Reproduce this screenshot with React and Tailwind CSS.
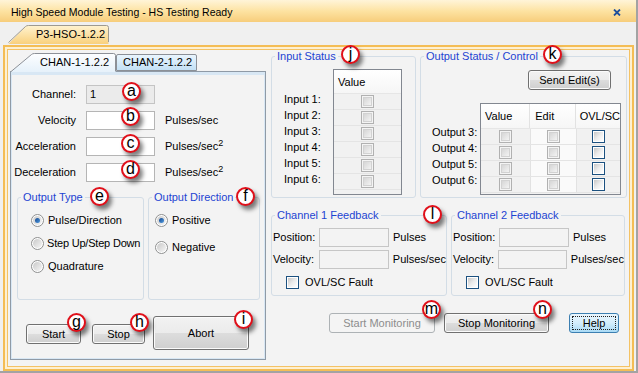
import React from 'react';

function Callout({ className, letter }) {
  return (
    <div
      className={`absolute z-30 flex h-[19px] w-[19px] items-center justify-center rounded-full border-2 border-[#e0101a] bg-white pb-[1px] text-[16px] leading-none text-black shadow-[3px_4px_4px_rgba(0,0,0,0.5)] ${className}`}
    >
      {letter}
    </div>
  );
}

function WinButton({ className, children }) {
  return (
    <div
      className={`flex items-center justify-center whitespace-nowrap rounded-[3px] border border-[#707070] bg-[linear-gradient(to_bottom,#f2f2f2_0%,#ebebeb_50%,#dddddd_50%,#cfcfcf_100%)] shadow-[inset_0_0_0_1px_#fbfbfb] ${className}`}
    >
      {children}
    </div>
  );
}

function Radio({ checked }) {
  return (
    <span className="flex h-[13px] w-[13px] shrink-0 items-center justify-center rounded-full border border-[#8e8f8f] bg-white">
      <span className="flex h-[9px] w-[9px] items-center justify-center rounded-full bg-gradient-to-br from-[#c9c9c9] to-[#f6f6f6]">
        {checked && <span className="h-[5px] w-[5px] rounded-full bg-gradient-to-br from-[#17498f] to-[#4f9ae0]" />}
      </span>
    </span>
  );
}

function CheckOff() {
  return (
    <span className="flex h-[13px] w-[13px] border border-[#b1b1b1] bg-[#f4f4f4] p-[1px]">
      <span className="h-full w-full border border-[#d2d2d2] bg-gradient-to-br from-[#d6d6d6] to-[#f3f3f3]" />
    </span>
  );
}

function CheckOn() {
  return (
    <span className="flex h-[13px] w-[13px] shrink-0 border border-[#1c5180] bg-white p-[1px]">
      <span className="h-full w-full bg-gradient-to-br from-[#c8c8c8] via-[#ececec] to-white" />
    </span>
  );
}

function Group({ title, className, children }) {
  return (
    <fieldset className={`min-w-0 shrink-0 rounded-[3px] border border-[#d3dde6] ${className}`}>
      <legend className="ml-[3px] whitespace-nowrap px-[2px] leading-[13px] text-[#1d44d2]">{title}</legend>
      {children}
    </fieldset>
  );
}

function Feedback({ title, className }) {
  return (
    <Group title={title} className={`h-[87px] ${className}`}>
      <div className="mt-[6px] flex h-[19px] items-center whitespace-nowrap pl-[1px]">
        <span className="w-[46px]">Position:</span>
        <div className="h-[19px] w-[70px] border border-[#c6c6c6] bg-[#f3f3f3]" />
        <span className="ml-[4px]">Pulses</span>
      </div>
      <div className="mt-[3px] flex h-[19px] items-center whitespace-nowrap pl-[1px]">
        <span className="w-[46px]">Velocity:</span>
        <div className="h-[19px] w-[70px] border border-[#c6c6c6] bg-[#f3f3f3]" />
        <span className="ml-[4px]">Pulses/sec</span>
      </div>
      <div className="ml-[14px] mt-[7px] flex h-[13px] items-center whitespace-nowrap">
        <CheckOn />
        <span className="ml-[6px]">OVL/SC Fault</span>
      </div>
    </Group>
  );
}

export default function App() {
  const fields = [
    { label: 'Channel:', unit: null, disabled: true },
    { label: 'Velocity', unit: 'Pulses/sec' },
    { label: 'Acceleration', unit: 'sq' },
    { label: 'Deceleration', unit: 'sq' },
  ];

  return (
    <div className="relative h-[373px] w-[638px] overflow-hidden border-b-2 border-r-2 border-[#a3a3a3] bg-[#f0f0f0] font-['Liberation_Sans',Arial,sans-serif] text-[11px] leading-[13px] text-black">
      {/* title bar */}
      <div className="flex h-[22px] items-center bg-gradient-to-b from-[#fff4d8] via-[#fde3a2] to-[#f7cd7b] pl-[11px] pr-[15px]">
        <span className="pt-[3px] text-[10.5px]">High Speed Module Testing - HS Testing Ready</span>
        <svg className="ml-auto mt-[3px]" width="8" height="7" viewBox="0 0 8 7">
          <path d="M1 0.5 L7 6.5 M7 0.5 L1 6.5" stroke="#1f4f9c" strokeWidth="1.8" />
        </svg>
      </div>

      {/* outer tab strip */}
      <div className="h-[20px]">
        <div className="relative z-10 ml-[8px] mt-[3px] h-[19px] w-[101px]">
          <svg className="absolute inset-0" width="101" height="19" viewBox="0 0 101 19">
            <defs>
              <linearGradient id="p3tab" x1="0" y1="0" x2="0" y2="1">
                <stop offset="0" stopColor="#fff3d0" />
                <stop offset="1" stopColor="#f9d07c" />
              </linearGradient>
            </defs>
            <path d="M0.5 19 L17.5 1.5 Q18.5 0.5 20.5 0.5 L98.5 0.5 Q100.5 0.5 100.5 2.5 L100.5 19 Z" fill="url(#p3tab)" />
            <path d="M0.5 17.5 L17.5 1.5 Q18.5 0.5 20.5 0.5 L98.5 0.5 Q100.5 0.5 100.5 2.5 L100.5 17" fill="none" stroke="#9e9a90" />
          </svg>
          <span className="relative block pl-[28px] pt-[3px]">P3-HSO-1.2.2</span>
        </div>
      </div>

      {/* orange tab page */}
      <div className="ml-[3px] h-[326px] w-[631px] border-2 border-[#f4bd55] bg-[#fdf0d2] p-[2px]">
        <div className="flex h-full border border-[#f4c264] bg-[#f3f3f3]">
          {/* left tab control */}
          <div className="ml-[2px] mt-[3px] w-[256px] shrink-0">
            <div className="flex h-[18px] items-start">
              <div className="relative z-10 h-[19px] w-[106px]">
                <svg className="absolute inset-0" width="106" height="19" viewBox="0 0 106 19">
                  <defs>
                    <linearGradient id="chtab" x1="0" y1="0" x2="0" y2="1">
                      <stop offset="0" stopColor="#fdfeff" />
                      <stop offset="1" stopColor="#e6f1fa" />
                    </linearGradient>
                  </defs>
                  <path d="M0.5 19 L21.5 1.5 Q22.5 0.5 24.5 0.5 L103.5 0.5 Q105.5 0.5 105.5 2.5 L105.5 19 Z" fill="url(#chtab)" />
                  <path d="M0.5 19 L21.5 1.5 Q22.5 0.5 24.5 0.5 L103.5 0.5 Q105.5 0.5 105.5 2.5 L105.5 18" fill="none" stroke="#8c9097" />
                </svg>
                <span className="relative block pl-[30px] pt-[3px]">CHAN-1-1.2.2</span>
              </div>
              <div className="mt-[1px] h-[17px] w-[81px] rounded-t-[2px] border border-[#8c9097] bg-gradient-to-b from-[#e9f5fd] to-[#c3e0f5] pl-[6px] pt-[1px]">
                CHAN-2-1.2.2
              </div>
            </div>
            <div className="h-[289px] border border-[#8f9aa6] bg-[#f3f3f3] shadow-[inset_0_0_0_1px_#d8e7f4,inset_0_2px_0_1px_#d8e7f4]">
              <div className="mt-[13px] flex flex-col gap-[7px]">
                {fields.map((f) => (
                  <div key={f.label} className="flex h-[19px] items-center">
                    <span className="w-[65px] text-right">{f.label}</span>
                    {f.disabled ? (
                      <div className="ml-[10px] flex h-[19px] w-[69px] items-center border border-[#c4c4c4] bg-[#ebebeb] pl-[3px]">1</div>
                    ) : (
                      <div className="ml-[10px] h-[19px] w-[69px] border border-[#b5b5b5] bg-white" />
                    )}
                    {f.unit === 'Pulses/sec' && <span className="ml-[10px]">Pulses/sec</span>}
                    {f.unit === 'sq' && (
                      <span className="ml-[10px]">
                        Pulses/sec<sup className="text-[9px]">2</sup>
                      </span>
                    )}
                  </div>
                ))}
              </div>

              <div className="ml-[6px] mt-[9px] flex gap-[4px]">
                <Group title="Output Type" className="h-[109px] w-[127px]">
                  <div className="ml-[13px] mt-[8px] flex h-[16px] items-center whitespace-nowrap">
                    <Radio checked />
                    <span className="ml-[4px]">Pulse/Direction</span>
                  </div>
                  <div className="ml-[13px] mt-[7px] flex h-[16px] items-center whitespace-nowrap">
                    <Radio />
                    <span className="ml-[3px] tracking-[-0.2px]">Step Up/Step Down</span>
                  </div>
                  <div className="ml-[13px] mt-[7px] flex h-[16px] items-center whitespace-nowrap">
                    <Radio />
                    <span className="ml-[4px]">Quadrature</span>
                  </div>
                </Group>
                <Group title="Output Direction" className="h-[109px] w-[112px]">
                  <div className="ml-[6px] mt-[8px] flex h-[16px] items-center">
                    <Radio checked />
                    <span className="ml-[4px]">Positive</span>
                  </div>
                  <div className="ml-[6px] mt-[11px] flex h-[16px] items-center">
                    <Radio />
                    <span className="ml-[4px]">Negative</span>
                  </div>
                </Group>
              </div>

              <div className="mt-[16px] flex items-start">
                <WinButton className="ml-[15px] mt-[8px] h-[20px] w-[55px]">Start</WinButton>
                <WinButton className="ml-[11px] mt-[8px] h-[20px] w-[53px]">Stop</WinButton>
                <WinButton className="ml-[8px] h-[34px] w-[96px]">Abort</WinButton>
              </div>
            </div>
          </div>

          {/* right side */}
          <div className="ml-[4px] flex w-[358px] shrink-0 flex-col">
            <div className="flex gap-[4px] pl-[1px]">
              <Group title="Input Status" className="h-[148px] w-[145px]">
                <div className="flex items-start">
                  <div className="ml-[12px] mt-[28px] flex w-[49px] flex-col">
                    {[1, 2, 3, 4, 5, 6].map((n) => (
                      <span key={n} className="h-[16px] whitespace-nowrap leading-[16px]">Input {n}:</span>
                    ))}
                  </div>
                  <div className="mt-[6px] h-[126px] w-[69px] border border-[#828790] bg-[#f1f1f1]">
                    <div className="flex h-[24px] items-end border-b border-[#e6e6e6] bg-gradient-to-b from-white to-[#f6f6f6] pb-[4px] pl-[4px]">
                      Value
                    </div>
                    {[1, 2, 3, 4, 5, 6].map((n) => (
                      <div key={n} className="flex h-[16px] items-center justify-center border-b border-[#e4e4e4]">
                        <CheckOff />
                      </div>
                    ))}
                  </div>
                </div>
              </Group>

              <Group title="Output Status / Control" className="h-[148px] w-[207px]">
                <WinButton className="ml-[107px] mt-[7px] h-[20px] w-[83px]">Send Edit(s)</WinButton>
                <div className="mt-[13px] flex items-start">
                  <div className="ml-[11px] mt-[21px] flex w-[48px] flex-col">
                    {[3, 4, 5, 6].map((n) => (
                      <span key={n} className="h-[16px] whitespace-nowrap leading-[16px]">Output {n}:</span>
                    ))}
                  </div>
                  <div className="h-[92px] w-[141px] border border-[#828790] bg-[#f1f1f1]">
                    <div className="flex h-[25px] border-b border-[#e6e6e6] bg-gradient-to-b from-white to-[#f6f6f6]">
                      <div className="flex w-[50px] items-end border-r border-[#e2e2e2] pb-[5px] pl-[4px]">Value</div>
                      <div className="flex w-[46px] items-end border-r border-[#e2e2e2] pb-[5px] pl-[5px]">Edit</div>
                      <div className="flex flex-1 items-end pb-[5px] pl-[4px]">OVL/SC</div>
                    </div>
                    {[3, 4, 5, 6].map((n) => (
                      <div key={n} className="flex h-[16px] border-b border-[#e4e4e4]">
                        <div className="flex w-[50px] items-center justify-center border-r border-[#e2e2e2]">
                          <CheckOff />
                        </div>
                        <div className="flex w-[46px] items-center justify-center border-r border-[#e2e2e2] bg-[#fafafa]">
                          <CheckOff />
                        </div>
                        <div className="flex flex-1 items-center justify-center">
                          <CheckOn />
                        </div>
                      </div>
                    ))}
                  </div>
                </div>
              </Group>
            </div>

            <div className="mt-[11px] flex gap-[4px] pl-[1px]">
              <Feedback title="Channel 1 Feedback" className="w-[176px]" />
              <Feedback title="Channel 2 Feedback" className="w-[174px]" />
            </div>

            <div className="mt-[17px] flex items-start">
              <div className="ml-[59px] flex h-[20px] w-[106px] items-center justify-center rounded-[3px] border border-[#adb2b5] bg-[#f4f4f4] text-[#8d8d8d]">
                Start Monitoring
              </div>
              <WinButton className="ml-[9px] h-[20px] w-[105px]">Stop Monitoring</WinButton>
              <div className="ml-[20px] h-[20px] w-[50px] rounded-[3px] border border-[#3c7fb1] bg-gradient-to-b from-[#eaf6fd] via-[#d4eefc] to-[#a9daf5] p-[2px]">
                <div className="flex h-full items-center justify-center border border-dotted border-[#222]">Help</div>
              </div>
            </div>
          </div>
        </div>
      </div>

      {/* callouts */}
      <Callout letter="a" className="left-[122px] top-[82px]" />
      <Callout letter="b" className="left-[121px] top-[107px]" />
      <Callout letter="c" className="left-[121px] top-[134px]" />
      <Callout letter="d" className="left-[121px] top-[160px]" />
      <Callout letter="e" className="left-[90px] top-[187px]" />
      <Callout letter="f" className="left-[236px] top-[187px]" />
      <Callout letter="g" className="left-[67px] top-[313px]" />
      <Callout letter="h" className="left-[130px] top-[313px]" />
      <Callout letter="i" className="left-[234px] top-[310px]" />
      <Callout letter="j" className="left-[341px] top-[45px]" />
      <Callout letter="k" className="left-[543px] top-[45px]" />
      <Callout letter="l" className="left-[423px] top-[205px]" />
      <Callout letter="m" className="left-[422px] top-[300px]" />
      <Callout letter="n" className="left-[533px] top-[300px]" />
    </div>
  );
}
